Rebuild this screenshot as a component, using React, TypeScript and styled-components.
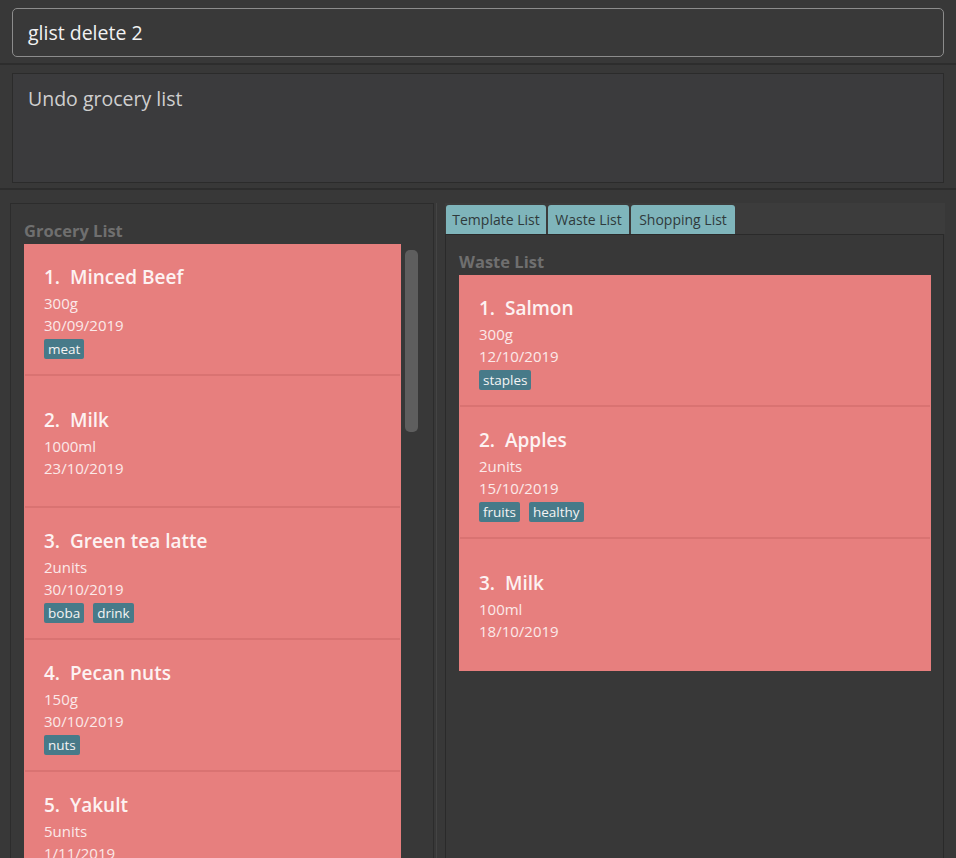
import styled, { createGlobalStyle } from "styled-components";

const GlobalStyle = createGlobalStyle`
  html, body {
    margin: 0;
    padding: 0;
    background: #383838;
  }
  body {
    font-family: "Open Sans", "Noto Sans", sans-serif;
  }
`;

const Page = styled.div`
  width: 956px;
  height: 858px;
  background: #383838;
  overflow: hidden;
  display: flex;
  flex-direction: column;
`;

const CommandSection = styled.div`
  padding: 8px 12px 6px 12px;
  border-bottom: 2px solid #2d2d2d;
`;

const CommandBox = styled.div`
  height: 47px;
  border: 1px solid #8c8c8c;
  border-radius: 5px;
  background: #393939;
  display: flex;
  align-items: center;
  padding-left: 15px;
  font-size: 19.5px;
  color: #f2f2f2;
`;

const ResultSection = styled.div`
  padding: 8px 12px 5px 12px;
  border-bottom: 2px solid #2d2d2d;
`;

const ResultBox = styled.div`
  height: 110px;
  border: 1px solid #2b2b2b;
  background: #3b3b3d;
  padding: 11px 15px;
  box-sizing: border-box;
  font-size: 19.5px;
  color: #cfcfcf;
`;

const Main = styled.div`
  flex: 1;
  display: flex;
  padding: 13px 11px 0 10px;
  gap: 11px;
  min-height: 0;
`;

const LeftPanel = styled.div`
  width: 424px;
  border: 1px solid #2c2c2c;
  border-bottom: none;
  box-sizing: border-box;
  padding: 14px 0 0 13px;
  display: flex;
  flex-direction: column;
  position: relative;
  &::after {
    content: "";
    position: absolute;
    top: -1px;
    right: -4px;
    bottom: 0;
    width: 1px;
    background: #444;
  }
`;

const PanelTitle = styled.div`
  font-size: 16.5px;
  font-weight: 700;
  color: #6f6f6f;
  height: 26px;
  line-height: 26px;
`;

const ListRow = styled.div`
  display: flex;
  gap: 4px;
  flex: 1;
  min-height: 0;
`;

const CardList = styled.div<{ $width: number }>`
  width: ${(p) => p.$width}px;
  display: flex;
  flex-direction: column;
  align-self: flex-start;
  background: #e77f7e;
`;

const Card = styled.div`
  height: 132px;
  flex-shrink: 0;
  box-sizing: border-box;
  padding-left: 20px;
  display: flex;
  flex-direction: column;
  justify-content: center;
  position: relative;
  &:not(:last-child)::after {
    content: "";
    position: absolute;
    left: 1px;
    right: 1px;
    bottom: 0;
    height: 2px;
    background: #d97372;
  }
`;

const CardTitle = styled.div`
  font-size: 19px;
  font-weight: 600;
  color: #fdf2f2;
  line-height: 30px;
  white-space: pre;
`;

const CardDetail = styled.div`
  font-size: 15px;
  color: #fbe9e9;
  line-height: 22px;
`;

const TagRow = styled.div`
  display: flex;
  gap: 9px;
  margin-top: 3px;
`;

const Tag = styled.span`
  background: #477a89;
  color: #f4f4f4;
  font-size: 13.5px;
  line-height: 20px;
  padding: 0 4px;
  border-radius: 2px;
`;

const ScrollTrack = styled.div`
  width: 13px;
  padding-top: 6px;
`;

const ScrollThumb = styled.div`
  height: 182px;
  background: #5e5e5e;
  border-radius: 5px;
`;

const RightPanel = styled.div`
  flex: 1;
  display: flex;
  flex-direction: column;
`;

const TabBar = styled.div`
  height: 31px;
  background: #3c3c3c;
  display: flex;
  align-items: flex-end;
  gap: 2px;
  padding-left: 1px;
`;

const Tab = styled.div<{ $width: number }>`
  width: ${(p) => p.$width}px;
  height: 29px;
  background: #7fb5bb;
  border-radius: 3px 3px 0 0;
  color: #2f3a3c;
  font-size: 14px;
  display: flex;
  align-items: center;
  justify-content: center;
  padding-bottom: 1px;
  box-sizing: border-box;
`;

const TabContent = styled.div`
  flex: 1;
  border: 1px solid #2a2a2a;
  border-bottom: none;
  margin-right: 1px;
  padding: 14px 0 0 13px;
  display: flex;
  flex-direction: column;
`;

type Item = {
  name: string;
  qty: string;
  date: string;
  tags: string[];
};

const groceries: Item[] = [
  { name: "Minced Beef", qty: "300g", date: "30/09/2019", tags: ["meat"] },
  { name: "Milk", qty: "1000ml", date: "23/10/2019", tags: [] },
  { name: "Green tea latte", qty: "2units", date: "30/10/2019", tags: ["boba", "drink"] },
  { name: "Pecan nuts", qty: "150g", date: "30/10/2019", tags: ["nuts"] },
  { name: "Yakult", qty: "5units", date: "1/11/2019", tags: ["drink"] },
];

const waste: Item[] = [
  { name: "Salmon", qty: "300g", date: "12/10/2019", tags: ["staples"] },
  { name: "Apples", qty: "2units", date: "15/10/2019", tags: ["fruits", "healthy"] },
  { name: "Milk", qty: "100ml", date: "18/10/2019", tags: [] },
];

function ItemCard({ item, index }: { item: Item; index: number }) {
  return (
    <Card>
      <CardTitle>{`${index + 1}.  ${item.name}`}</CardTitle>
      <CardDetail>{item.qty}</CardDetail>
      <CardDetail>{item.date}</CardDetail>
      {item.tags.length > 0 && (
        <TagRow>
          {item.tags.map((t) => (
            <Tag key={t}>{t}</Tag>
          ))}
        </TagRow>
      )}
    </Card>
  );
}

const tabs = [
  { id: 1, name: "Template List", width: 100 },
  { id: 2, name: "Waste List", width: 81 },
  { id: 3, name: "Shopping List", width: 104 },
];

const App = () => {
  return (
    <Page>
      <GlobalStyle />
      <CommandSection>
        <CommandBox>glist delete 2</CommandBox>
      </CommandSection>
      <ResultSection>
        <ResultBox>Undo grocery list</ResultBox>
      </ResultSection>
      <Main>
        <LeftPanel>
          <PanelTitle>Grocery List</PanelTitle>
          <ListRow>
            <CardList $width={377}>
              {groceries.map((g, i) => (
                <ItemCard key={i} item={g} index={i} />
              ))}
            </CardList>
            <ScrollTrack>
              <ScrollThumb />
            </ScrollTrack>
          </ListRow>
        </LeftPanel>
        <RightPanel>
          <TabBar>
            {tabs.map((t) => (
              <Tab key={t.id} $width={t.width}>
                {t.name}
              </Tab>
            ))}
          </TabBar>
          <TabContent>
            <PanelTitle>Waste List</PanelTitle>
            <CardList $width={472}>
              {waste.map((w, i) => (
                <ItemCard key={i} item={w} index={i} />
              ))}
            </CardList>
          </TabContent>
        </RightPanel>
      </Main>
    </Page>
  );
};

export default App;
